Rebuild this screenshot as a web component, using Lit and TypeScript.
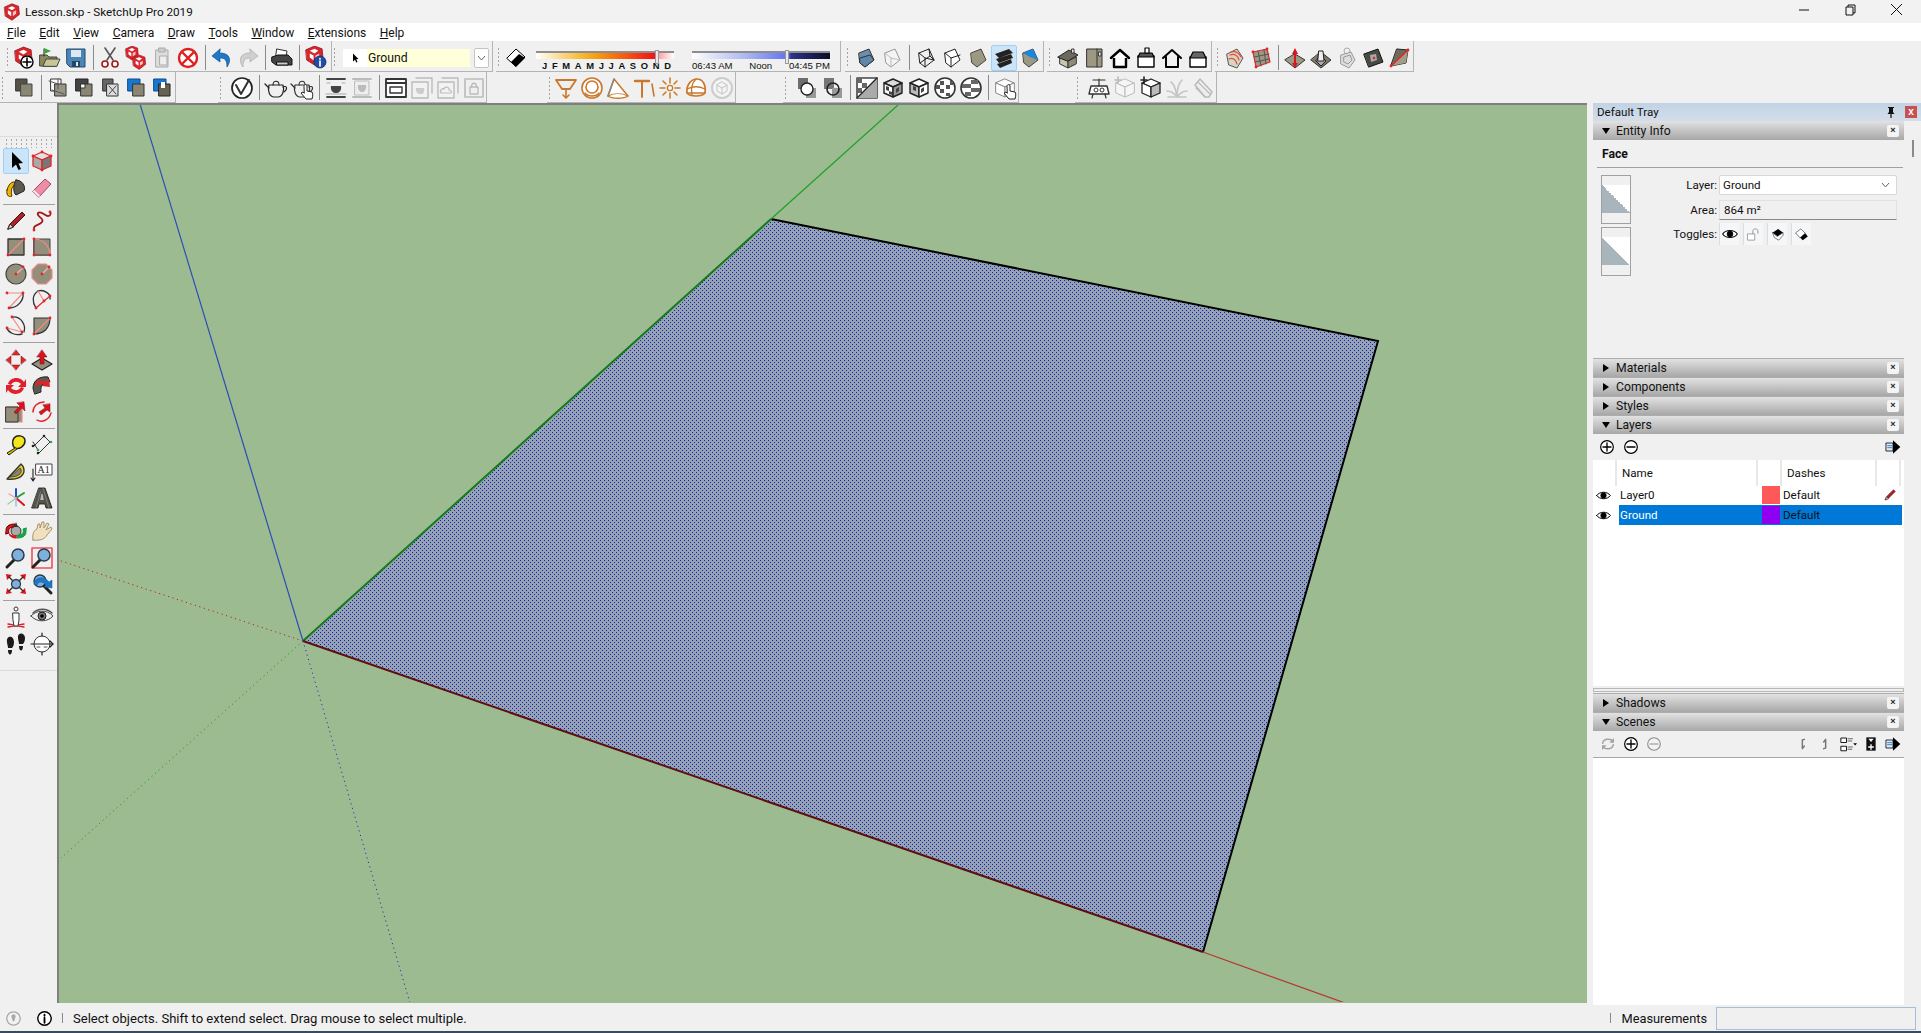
import { LitElement, css, html, svg } from 'lit';
import { customElement } from 'lit/decorators.js';

const RED = '#e0262b';
const GY = '#948f7b';
const DK = '#2f2f2a';

const p = (d: string, fill = 'none', stroke = 'none', w = 1) =>
  svg`<path d=${d} fill=${fill} stroke=${stroke} stroke-width=${w} stroke-linejoin="round" stroke-linecap="round"/>`;
const dot = (x: number, y: number, r = 1.4, c = RED) => svg`<circle cx=${x} cy=${y} r=${r} fill=${c}/>`;
const ring = (x: number, y: number, r: number, fill = 'none', stroke = DK, w = 1) =>
  svg`<circle cx=${x} cy=${y} r=${r} fill=${fill} stroke=${stroke} stroke-width=${w}/>`;

// the red sketchup mark
const su = (x: number, y: number, s: number) => svg`<g transform="translate(${x} ${y}) scale(${s})">
  ${p('M1 4 L10 0 L18 3 L19 13 L10 20 L2 15Z', '#d9252b', '#8c1419', 0.8)}
  ${p('M5 5 L10 3 L14 5 L10 8Z', '#fff')}${p('M5 8 L9 10 V15 L5 12Z', '#fff')}${p('M11 10 L15 8 V12 L11 15Z', '#f5c6c6')}
</g>`;

const cube = (t: string, l: string, r: string, s = DK, w = 1) => svg`
  ${p('M12 3 L21 7 L12 11 L3 7Z', t, s, w)}${p('M3 7 L12 11 V21 L3 17Z', l, s, w)}${p('M21 7 L12 11 V21 L21 17Z', r, s, w)}`;

// tilted box used by the face style buttons
const tilt = (a: string, b: string, s = '#333', w = 1) => svg`
  ${p('M5 7 L15 3 L20 14 L11 21 L6 17Z', a, s, w)}${p('M6 12 L16 9 L20 14 L11 21 L6 17Z', b, s, w)}`;

const magnifier = (x = 0, y = 0, lens = '#7fb0dc') => svg`<g transform="translate(${x} ${y})">
  ${p('M10 14 L3 21', 'none', '#222', 3)}${ring(14, 9, 6, lens, '#2b3a4a', 1.5)}</g>`;

const house = (fill: string, roof: string, s = '#000', w = 2) => svg`
  ${p('M6 11 V21 H18 V11', fill, s, w)}${p('M3 12 L12 4 L21 12', roof, s, w)}`;

const teapot = (s = '#222', f = 'none') => svg`
  ${p('M5 9 H19 C21 15 18 21 14 21 H10 C6 21 3 15 5 9Z', f, s, 1.2)}
  ${p('M9 9 C9 4 15 4 15 9', 'none', s, 1.1)}${p('M19 11 C23 9 24 13 20 16', 'none', s, 1.1)}${p('M5 12 L1 8', 'none', s, 1.3)}`;

const hand = (x = 0, y = 0) => svg`<g transform="translate(${x} ${y})">
  ${p('M3 2 C3 0 6 0 6 2 V7 L11 8 C12 9 12 12 11 15 H5 L0 9 L2 8 L3 9Z', '#fff', '#222', 1)}</g>`;

const fourArrows = (c = RED) => svg`${p('M12 2 L16 7 H8Z M12 22 L16 17 H8Z M2 12 L7 8 V16Z M22 12 L17 8 V16Z', c, '#7a0f0f', 0.5)}`;

const ICONS: Record<string, unknown> = {
  newfile: svg`${su(2, 1, 0.95)}${ring(15, 16, 6, '#fff', '#000', 1.4)}${p('M15 12 V20 M11 16 H19', 'none', '#000', 1.6)}`,
  open: svg`${p('M2 9 H9 L11 11 H19 V20 H2Z', '#8a8a5c', '#444')}${p('M5 20 L8 13 H22 L19 20Z', '#c7c694', '#444')}${p('M6 3 V10', 'none', '#222', 1)}${p('M6 2 L13 5 L6 8Z', '#3aa43a')}`,
  save: svg`${p('M3 3 H21 V21 H6 L3 18Z', '#4a87b8', '#24486a')}${p('M7 4 H17 V11 H7Z', '#dfe8f0')}${p('M8 15 H16 V21 H8Z', '#28445f')}${p('M12 16 H14 V20 H12Z', '#dfe8f0')}`,
  cut: svg`${p('M17 2 L9 14 M7 2 L15 14', 'none', '#555', 1.6)}${ring(7, 18, 3, '#fff', '#a01818', 1.6)}${ring(17, 18, 3, '#fff', '#a01818', 1.6)}`,
  copy: svg`${su(1, 0, 0.7)}${su(8, 9, 0.72)}`,
  paste: svg`${p('M6 4 H18 V21 H6Z', '#ddd', '#aaa')}${p('M9 2 H15 V6 H9Z', '#ccc', '#aaa')}${p('M10 10 H17 V19 H10Z', '#eee', '#aaa')}`,
  erase: svg`${ring(12, 12, 9, '#fff', '#e21d1d', 2.4)}${p('M7 7 L17 17 M17 7 L7 17', 'none', '#e21d1d', 2.4)}`,
  undo: svg`${p('M10 3 L2 10 L10 16 V12 C15 12 17 14 17 21 C22 14 20 7 10 7Z', '#1d78c8', '#10558f', 0.7)}`,
  redo: svg`${p('M14 3 L22 10 L14 16 V12 C9 12 7 14 7 21 C2 14 4 7 14 7Z', '#d0d0d0', '#aaa', 0.7)}`,
  print: svg`${p('M7 3 L17 5 L16 11 H6Z', '#fff', '#333')}${p('M2 11 L8 9 H18 L22 13 V19 H6 L2 16Z', '#444', '#111')}${p('M7 16 H18 V19 H7Z', '#ccc', '#111')}`,
  suinfo: svg`${su(1, 0, 0.95)}${ring(16, 16, 6, '#1d4fa8', '#0d2a60', 0.8)}${p('M16 15 V20 M16 12.5 V13', 'none', '#fff', 1.7)}`,
  eraserstyle: svg`${p('M3 12 L12 3 L21 11 L12 20Z', '#fff', '#000', 1)}${p('M7 16 L15 8 L21 12 L12 21Z', '#000')}`,
  fxray: tilt('#6d8fae', '#5f86ab'),
  fxray2: svg`${p('M5 7 L15 3 L20 14 L11 21 L6 17Z', '#f4f4f4', '#999')}${p('M5 7 L11 12 L20 14 M11 12 L11 21', 'none', '#bbb')}`,
  fwire: svg`${p('M5 7 L15 3 L20 14 L11 21 L6 17Z M5 7 L11 12 L20 14 M11 12 V21 M15 3 L16 10 L6 17 M16 10 L20 14', 'none', '#222')}`,
  fhidden: svg`${p('M5 7 L15 3 L20 14 L11 21 L6 17Z', '#fff', '#222')}${p('M5 7 L11 12 L20 9', 'none', '#222')}${p('M11 12 V21', 'none', '#222')}`,
  fshaded: svg`${p('M5 7 L15 3 L20 14 L11 21 L6 17Z', '#9d9882', '#444')}`,
  fstripe: svg`${p('M3 8 L17 3 L21 7 L7 12Z M4 13 L19 8 L21 12 L7 17Z M5 18 L19 13 L20 17 L8 22Z', '#222')}${p('M7 12 L21 7 L19 8 L4 13Z M7 17 L21 12 L19 13 L5 18Z', '#b9b39c')}`,
  ftex: svg`${p('M5 7 L15 3 L20 14 L11 21 L6 17Z', '#9d9882', '#444')}${p('M5 7 L15 3 L20 14 L12 11Z', '#1a86dc')}`,
  viso: svg`${p('M4 11 L12 15 V22 L4 18Z', '#c9c5b2', '#333')}${p('M20 11 L12 15 V22 L20 18Z', '#8f8a74', '#333')}${p('M2 11 L13 4 L22 9 L12 15Z', '#6c6a5c', '#222')}${p('M16 3 H18 V7 H16Z', '#fff', '#333')}`,
  vtop: svg`${p('M5 3 H20 V21 H5Z', '#9d9882', '#333')}${p('M15 3 V21', 'none', '#333')}${p('M17 6 H19 V10 H17Z', '#fff', '#333')}`,
  vfront: house('#fff', '#fff', '#000', 2.4),
  vright: svg`${p('M4 10 H20 V21 H4Z', '#fff', '#000', 1.4)}${p('M4 11 L6 7 H18 L20 11Z', '#555', '#000', 1.2)}${p('M11 2 H15 V7 H11Z', '#fff', '#000', 1.2)}`,
  vback: house('none', 'none', '#000', 2),
  vleft: svg`${p('M4 11 H20 V21 H4Z', '#fff', '#000', 1.4)}${p('M4 12 L7 6 H17 L20 12Z', '#666', '#000', 1.2)}`,
  sand1: svg`${p('M4 8 L14 3 L20 12 L14 22 L6 19Z', '#d9d4c8', '#555')}${p('M7 9 C12 7 15 10 16 14 M6 13 C10 11 13 14 14 18 M8 6 C12 5 16 7 18 11', 'none', '#e2502e', 1.2)}`,
  sand2: svg`${p('M4 6 L18 3 L21 16 L7 21Z', '#9d9882', RED, 1.2)}${p('M9 5 L12 20 M15 4 L17 18 M5 11 L20 8 M6 16 L20 13', 'none', '#555')}${dot(4, 6)}${dot(18, 3)}${dot(7, 21)}`,
  sand3: svg`${p('M12 8 L22 14 L12 22 L2 14Z', '#9d9882', '#333')}${p('M12 2 L15 8 H13 V17 H15 L12 22 L9 17 H11 V8 H9Z', '#d8141c')}`,
  sand4: svg`${p('M12 6 L22 14 L12 22 L2 14Z', '#7d7966', '#333')}${p('M12 10 L17 15 L12 20 L7 15Z', '#aaa', '#222')}${p('M10 5 L14 5 L15 15 H9Z', '#eee', '#222')}`,
  sand5: svg`${ring(12, 5, 3, 'none', '#aaa')}${p('M6 9 L16 6 L20 14 L14 22 L6 18Z', '#ddd', '#999')}${p('M9 11 L15 9 L17 14 L13 18 L9 16Z', 'none', '#999')}`,
  sand6: svg`${p('M3 8 L17 3 L22 16 L8 21Z', '#4a4a44', '#111')}${p('M9 9 L15 8 L16 14 L10 16Z', '#aaa')}${dot(13, 12, 1.3)}`,
  sand7: svg`${p('M10 3 L21 4 L19 17 L4 20Z', '#6d6a5c', '#222')}${p('M21 4 L4 20', 'none', RED, 1.3)}${p('M4 20 L21 4 L19 17Z', '#a19c86')}${p('M21 4 L4 20', 'none', RED, 1.3)}${dot(21, 4)}${dot(4, 20)}`,

  sq0: svg`${p('M4 3 H15 V15 H4Z', '#555349', '#333')}${p('M9 8 H20 V20 H9Z', '#8a8674', '#444')}`,
  sq1: svg`${p('M5 3 H15 V15 H5Z', '#fff', '#333')}${p('M9 8 H20 V20 H9Z', '#999584', '#333')}${p('M3 5 L12 8 M6 14 L18 18 M12 3 V13', 'none', '#555')}`,
  sq2: svg`${p('M4 3 H16 V15 H4Z', '#444', '#222')}${p('M9 8 H20 V20 H9Z', '#8a8674', '#333')}${p('M9 8 H13 V12 H9Z', '#fff', '#333')}`,
  sq3: svg`${p('M5 3 H15 V15 H5Z', '#666', '#333')}${p('M9 8 H20 V20 H9Z', '#ddd', '#333')}${p('M11 10 L18 18 M18 10 L11 18', 'none', '#444')}`,
  sq4: svg`${p('M4 3 H16 V15 H4Z', '#1877d1', '#0f4d8c')}${p('M9 8 H20 V20 H9Z', '#8a8674', '#333')}`,
  sq5: svg`${p('M4 3 H16 V15 H4Z', '#1877d1', '#0f4d8c')}${p('M9 8 H20 V20 H9Z', '#666352', '#222')}${p('M11 6 H15 V12 H11Z', '#fff')}`,
  vray: svg`${ring(12, 12, 10, '#fff', '#222', 1.7)}${p('M6 9 L11 18 L19 4', 'none', '#333', 2)}`,
  tea: teapot(),
  teahand: svg`${teapot('#333')}${hand(11, 8)}`,
  tealines: svg`${p('M3 3 H21 M3 21 H21', 'none', '#444', 1.8)}${p('M7 10 H17 C18 14 15 17 13 17 H11 C9 17 6 14 7 10Z', '#444')}${p('M3 7 H6 M18 7 H21 M2 18 H22', 'none', '#aaa')}`,
  teabox: svg`${p('M3 3 H21 M3 21 H21', 'none', '#bbb', 1.8)}${p('M5 5 H19 V19 H5Z', '#eee', '#bbb')}${p('M8 9 H16 C17 13 14 16 13 16 H11 C10 16 7 13 8 9Z', '#bbb')}`,
  win: svg`${p('M2 3 H22 V21 H2Z', '#fff', '#333', 1.8)}${p('M2 7 H22', 'none', '#333', 1.8)}${p('M6 11 H18 V17 H6Z', 'none', '#333', 1.4)}`,
  wintea: svg`${p('M6 2 H22 V17', 'none', '#bbb', 1.4)}${p('M2 6 H18 V22 H2Z', '#f2f2f2', '#bbb', 1.4)}${p('M6 12 H14 C15 15 13 18 12 18 H9 C8 18 5 15 6 12Z', '#ccc')}`,
  wincloud: svg`${p('M6 2 H22 V17', 'none', '#bbb', 1.4)}${p('M2 6 H18 V22 H2Z', '#f2f2f2', '#bbb', 1.4)}${p('M5 17 C3 14 7 12 8 13 C9 10 14 11 13 14 C16 14 16 17 14 17Z', 'none', '#bbb', 1.2)}`,
  winlock: svg`${p('M3 3 H21 V21 H3Z', 'none', '#bbb', 1.6)}${p('M8 11 H16 V18 H8Z', 'none', '#bbb', 1.3)}${p('M9.5 11 C9.5 6 14.5 6 14.5 11', 'none', '#bbb', 1.3)}`,

  funnel: svg`${p('M2 4 H22 L16 13 H8Z', 'none', '#c9782c', 1.8)}${p('M12 13 V21 M9 19 L12 22 L15 19', 'none', '#c9782c', 1.6)}`,
  rings: svg`${ring(12, 12, 10, '#fff', '#c9782c', 1.6)}${ring(12, 11, 6, 'none', '#c9782c', 1.6)}${p('M5 17 C8 21 16 21 19 17', 'none', '#c9782c', 1.4)}`,
  cone: svg`${p('M8 3 L2 20 C6 23 18 23 22 20Z', '#fff', '#c9782c', 1.5)}${p('M2 20 L8 3', 'none', '#888', 1.5)}${p('M2 20 C8 17 16 17 22 20', 'none', '#c9782c', 1.2)}`,
  tee: svg`${p('M3 5 H17', 'none', '#c9782c', 2.4)}${p('M10 5 V21', 'none', '#c9782c', 2)}${p('M20 8 L22 20', 'none', '#c9782c', 1.6)}`,
  burst: svg`${ring(12, 12, 2.6, '#fff', '#c9782c', 1.4)}${p('M12 2 V7 M12 17 V22 M2 12 H7 M17 12 H22 M5 5 L8 8 M16 16 L19 19 M19 5 L16 8 M8 16 L5 19', 'none', '#c9782c', 1.5)}`,
  dome: svg`${p('M3 17 C2 8 8 3 13 3 C19 3 22 9 21 17Z', '#fff', '#c9782c', 1.7)}${p('M3 17 C6 21 18 21 21 17 M12 3 C7 8 7 14 8 19 M3 13 C9 10 15 10 21 13', 'none', '#c9782c', 1.3)}`,
  circube: svg`${ring(12, 12, 10, '#f4f4f4', '#ccc', 2)}${p('M12 6 L17 9 V15 L12 18 L7 15 V9Z M7 9 L12 12 L17 9 M12 12 V18', 'none', '#c4c4c4')}`,
  ovl1: svg`${p('M3 2 H13 V13 H3Z', '#6d6d6d')}${p('M11 12 H21 V22 H11Z', '#999')}${ring(12, 13, 6, '#fff', '#222', 1.4)}`,
  ovl2: svg`${p('M3 2 H13 V13 H3Z', '#777')}${p('M11 12 H21 V22 H11Z', '#999')}${ring(12, 13, 6, 'none', '#222', 1.6)}`,
  diag: svg`${p('M2 2 H22 V22 H2Z', '#fff', '#444', 1.6)}${p('M2 22 L22 2 V22Z', '#aaa')}${p('M2 2 H7 V7 H2Z M7 7 H12 V12 H7Z M2 12 H7 V17 H2Z', '#666')}${p('M2 22 L22 2', 'none', '#222', 1.2)}`,
  ckcube1: svg`${cube('#ddd', '#fff', '#999', '#222', 1.4)}${p('M5 10 L8 11 V15 L5 14Z M8 15 L11 16 V19 L8 18Z M15 13 L18 11 V15 L15 17Z', '#444')}`,
  ckcube2: svg`${cube('#fff', '#bbb', '#fff', '#222', 1.4)}${p('M14 13 L17 11 V15 L14 17Z M6 10 L9 11 V15 L6 14Z', '#444')}`,
  ckcirc1: svg`${ring(12, 12, 10, '#fff', '#333', 1.6)}${p('M7 5 H11 V9 H7Z M13 9 H17 V13 H13Z M7 13 H11 V17 H7Z M13 17 H17 V20 H13Z M3 9 H7 V13 H3Z M17 5 H20 V9 H17Z', '#555')}`,
  ckcirc2: svg`${ring(12, 12, 10, '#fff', '#333', 1.6)}${p('M3 8 H12 V12 H3Z M12 12 H21 V16 H12Z M6 16 H12 V20 H6Z M12 4 H19 V8 H12Z', '#666')}`,
  cubehand: svg`${cube('#fff', '#fff', '#fff', '#888', 1)}${hand(11, 8)}`,
  robot: svg`${p('M4 10 H20 L22 18 H2Z', '#fff', '#333', 1.4)}${p('M12 3 V10', 'none', '#333', 1.2)}${p('M6 4 L18 4', 'none', '#333', 1.2)}${ring(9, 14, 2, 'none', '#333')}${ring(15, 14, 2, 'none', '#333')}${p('M6 18 L5 22 M18 18 L19 22', 'none', '#333', 1.2)}`,
  pluscube: svg`${cube('#f6f6f6', '#f6f6f6', '#f6f6f6', '#bbb', 1)}${p('M5 1 V7 M2 4 H8', 'none', '#bbb', 1.6)}`,
  plusblack: svg`${cube('#fff', '#fff', '#bbb', '#222', 1.3)}${p('M5 1 V7 M2 4 H8', 'none', '#222', 1.6)}`,
  fountain: svg`${p('M12 21 C11 14 10 9 6 6 M12 21 C12 14 13 8 17 4 M12 21 C9 17 6 15 2 15 M12 21 C15 17 18 15 22 15 M3 21 H21', 'none', '#c4c4c4', 1.6)}`,
  graypen: svg`${p('M4 9 L9 3 L21 16 L18 21 L14 21Z', '#eee', '#bbb', 1.5)}${p('M7 6 L19 18 M5 12 L14 21', 'none', '#bbb', 1.2)}`,

  select: svg`${p('M8 3 V19 L12 15.5 L14.5 21 L17 20 L14.5 14.5 L19 14Z', '#000')}`,
  component: svg`${cube('#e2e2e2', '#a8a8a8', '#777', RED, 1.3)}${dot(12, 3)}${dot(3, 7)}${dot(21, 7)}${dot(12, 21)}`,
  paint: svg`${p('M3 14 C5 6 10 4 14 8 C8 8 6 15 8 20 C4 22 2 18 3 14Z', '#f2b400', '#4a3b00')}${p('M12 4 C18 4 22 10 20 15 L12 19 C9 17 9 8 12 4Z', '#5c5a4e', '#222')}`,
  eraser: svg`${p('M3 15 L15 3 L21 8 L9 21Z', '#ef8ca6', '#a04a60')}${p('M3 15 L9 21 L10 20 L4 14Z', '#fff')}`,
  pencil: svg`${p('M6 15 L18 3 L21 6 L9 18 L4 20Z', '#a8242a', '#4a0f12')}${p('M4 20 L6 15 L9 18Z', '#e8d8a8', '#333')}`,
  freehand: svg`${p('M4 21 C3 15 9 17 12 13 C15 9 6 8 8 4 C11 1 15 7 18 7 C21 7 21 4 20 3', 'none', '#a01818', 1.8)}${dot(4, 21)}${dot(20, 3)}`,
  rect: svg`${p('M4 4 H20 V20 H4Z', GY, '#333', 1.3)}${p('M4 20 L20 4', 'none', '#f08a8a', 1.4)}${dot(4, 20)}${dot(20, 4)}`,
  rotrect: svg`${p('M4 4 H20 V20 H4Z', GY, '#444', 1)}${p('M4 4 C13 4 20 11 20 20 H4Z', GY)}${p('M4 4 C13 4 20 11 20 20 M4 20 H20 M4 4 V20', 'none', '#f08a8a', 1.2)}${p('M4 4 V20 H20', 'none', '#333', 1)}${dot(4, 4)}${dot(20, 20)}${dot(4, 20)}`,
  circle: svg`${ring(12, 12, 10, GY, '#444', 1.2)}${p('M12 12 L20 5', 'none', '#f5b0b0', 1.3)}${dot(12, 12)}${dot(19, 5)}`,
  polygon: svg`${p('M8 2 H16 L22 8 V16 L16 22 H8 L2 16 V8Z', GY, '#f08a8a', 1.2)}${p('M12 12 L19 5', 'none', '#f5b0b0', 1.3)}${dot(12, 12)}${dot(19, 5)}`,
  arc: svg`${p('M3 5 H19 L5 20', 'none', '#f08a8a', 1.2)}${p('M19 5 C20 12 14 20 5 20', 'none', '#333', 1.3)}${dot(3, 5)}${dot(19, 5)}${dot(5, 20)}`,
  arc2: svg`${p('M8 3 C14 1 21 6 20 11', 'none', '#333', 1.3)}${p('M8 3 C2 7 2 14 6 20', 'none', '#333', 1.3)}${p('M6 20 L20 8', 'none', RED, 1.2)}${p('M8 3 L14 13', 'none', '#f08a8a', 1.2)}${dot(6, 20)}${dot(20, 8)}${dot(14, 13)}`,
  arc3: svg`${p('M8 3 C18 2 22 12 20 18', 'none', '#333', 1.3)}${p('M8 3 L18 18 L3 14', 'none', '#f08a8a', 1.2)}${p('M3 14 C4 18 10 22 18 20', 'none', '#333', 1.3)}${dot(8, 3)}${dot(18, 18)}${dot(3, 14)}`,
  pie: svg`${p('M4 4 H20 C20 14 14 20 4 20Z', GY, '#333', 1.1)}${p('M4 20 L20 4', 'none', '#f08a8a', 1.3)}${dot(4, 20)}${dot(20, 4)}`,
  move: fourArrows(),
  pushpull: svg`${p('M2 16 L12 10 L22 16 L12 22Z', GY, '#222', 1.2)}${p('M12 2 L17 9 H14 V16 H10 V9 H7Z', '#d8141c', '#7a0f0f', 0.5)}`,
  rotate: svg`${p('M4 10 C6 3 16 2 20 8 L22 5 V13 H14 L17 10 C14 7 9 7 7 11Z M20 14 C18 21 8 22 4 16 L2 19 V11 H10 L7 14 C10 17 15 17 17 13Z', '#e0202a')}`,
  followme: svg`${p('M3 14 C3 6 10 2 18 3 L20 8 C14 7 10 11 11 18 L5 20Z', '#5c5a4e', '#222')}${p('M5 10 C8 5 14 6 15 8 L19 5 L20 13 L12 12 L13 10 C10 9 8 11 7 13Z', '#e0202a')}`,
  scale: svg`${p('M2 7 H18 V22 H2Z', GY, '#f08a8a', 1.2)}${p('M2 7 H14 V22 H2Z', GY, '#333', 1)}${p('M20 2 L21 11 L18 8 L12 14 L10 12 L16 6 L13 3Z', '#e0101a', '#7a0f0f', 0.5)}`,
  offset: svg`${p('M3 12 C3 6 8 2 14 2', 'none', '#e0202a', 1.4)}${p('M7 20 C12 23 19 20 21 13', 'none', '#e0202a', 1.4)}${p('M20 4 L20 12 L17 10 L11 15 L9 12 L15 8 L13 5Z', '#d8141c', '#7a0f0f', 0.5)}`,
  tape: svg`${p('M10 5 C14 1 21 3 21 8 C21 13 15 17 11 15 C8 13 8 8 10 5Z', '#f2e61a', '#222', 1.5)}${p('M11 15 L3 20 L5 22 L13 16', '#d6b800', '#222')}`,
  dim: svg`${p('M4 13 L14 3 M8 21 L20 9 M3 9 L8 17 M14 3 L20 9', 'none', '#333', 1)}${dot(3, 13, 1.3, '#222')}${dot(8, 20, 1.3, '#222')}${dot(14, 3, 1.3, '#222')}${dot(21, 9, 1.3, '#32a852')}${dot(8, 17, 1.3, '#32a852')}`,
  protractor: svg`${p('M3 19 L17 4 C23 9 21 21 3 19Z', '#e6d228', '#333', 1.4)}${p('M6 17 L16 8 C19 11 17 17 6 17Z', '#8a8570', '#333', 0.8)}`,
  text: svg`${p('M6 4 H22 V15 H6Z', '#fff', '#444')}<text x="7.5" y="13" font-family="Liberation Serif" font-size="10" fill="#222">A1</text>${p('M3 9 V21 M1 18 L3 21 L5 18', 'none', '#222', 1.1)}`,
  axes: svg`${p('M12 12 V3', 'none', '#1a4fd0', 2)}${p('M12 12 L20 7', 'none', '#23a23a', 2)}${p('M12 12 L20 19', 'none', '#d8141c', 2)}${p('M12 12 L5 8', 'none', '#f4a0a0', 1.4)}${p('M12 12 L4 18', 'none', '#9ad29a', 1.4)}${p('M12 12 V20', 'none', '#a0b4e8', 1.4)}`,
  text3d: svg`${p('M9 2 H15 L22 22 H16 L15 18 H9 L8 22 H2Z', '#55534a', '#111', 0.8)}${p('M11.4 8 H12.6 L13.8 14 H10.2Z', '#bbb')}${p('M6 22 L10.5 6 M13 2 L19 22', 'none', '#8a8a80', 0.8)}`,
  orbit: svg`${ring(12, 12, 5, '#aaa', '#333')}${p('M2 11 C2 6 7 5 11 5 L10 8 C5 8 4 11 5 14 L2 15Z', '#d8141c', '#600')}${p('M22 13 C22 18 17 19 13 19 L14 16 C19 16 20 13 19 10 L22 9Z', '#2a9c3c', '#0a4')}${p('M5 16 C8 20 12 20 13 19 L12 16 C9 17 7 16 5 14Z', '#d8141c')}${p('M12 3 L14 8 H10Z', '#333')}`,
  pan: svg`${p('M3 21 C2 15 4 11 7 10 L8 5 L10 5 L10 9 L12 3 L14 3 L14 9 L17 4 L19 5 L16 11 L21 8 L22 10 L17 16 C15 20 10 22 3 21Z', '#f1e0bf', '#a89570', 1)}`,
  zoom: magnifier(),
  zoomwin: svg`${p('M2 2 H22 V22 H2Z', 'none', '#f0505a', 1.6)}${magnifier()}`,
  zoomext: svg`${ring(12, 12, 4.5, '#7fb0dc', '#2b3a4a', 1.3)}${p('M2 2 L8 3 L3 8Z M22 2 L16 3 L21 8Z M2 22 L3 16 L8 21Z M22 22 L21 16 L16 21Z', '#d8141c')}${p('M5 5 L9 9 M19 5 L15 9 M5 19 L9 15 M19 19 L15 15', 'none', '#333', 1.4)}`,
  zoomprev: svg`${ring(10, 9, 6, '#7fb0dc', '#2b3a4a', 1.4)}${p('M14 14 L21 21', 'none', '#222', 3)}${p('M4 12 C4 5 14 3 19 10 L22 8 V16 L14 15 L16 13 C13 9 8 9 7 13Z', '#1d78c8', '#10558f', 0.5)}`,
  position: svg`${p('M4 19 L20 22 M4 22 L20 19', 'none', '#e0202a', 1.3)}${ring(12, 4, 2, '#fff', '#333')}${p('M9 8 H15 L15 15 L14 21 H10 L9 15Z', '#fff', '#333', 1)}`,
  look: svg`${p('M1 11 C6 5 17 4 23 11 C18 17 7 18 1 11Z', '#efefef', '#444', 1)}${ring(12, 11, 4, '#777', '#222')}${dot(12, 11, 1.8, '#000')}${p('M3 8 C8 3 17 3 22 8', 'none', '#555', 1.4)}`,
  walk: svg`${p('M3 10 C2 3 10 3 10 10 C10 13 9 15 8 16 H4 C4 14 3 12 3 10Z M4 18 H8 C8 24 4 24 4 18Z', '#1a1a1a')}${p('M14 6 C13 0 21 0 21 6 C21 9 20 11 19 12 H15 C15 10 14 8 14 6Z M15 14 H19 C19 20 15 20 15 14Z', '#1a1a1a')}`,
  section: svg`${ring(12, 12, 8, '#fff', '#333')}${p('M1 12 H23', 'none', '#222', 1.2)}${p('M20 9 L23 12 L20 15 M12 1 V4 M12 20 V23', 'none', '#222', 1.2)}${p('M7 15 H10 M14 15 H17', 'none', '#555')}`,

  eye: svg`${p('M1 12 C6 5 18 5 23 12 C18 19 6 19 1 12Z', '#fff', '#000', 1.6)}${ring(12, 12, 4.4, '#000', '#000')}`,
  unlock: svg`${p('M3 11 H14 V21 H3Z', '#fff', '#999', 1.4)}${p('M11 11 V6 C11 2 19 2 19 6 V10', 'none', '#999', 1.6)}`,
  castshadow: svg`${p('M4 9 L13 3 L21 9 L12 15Z', '#000')}${p('M4 9 L7 17 L14 21 L21 13 V9 L12 15Z', '#fff', '#333')}`,
  recvshadow: svg`${p('M3 9 L11 3 L18 10 L10 17Z', '#fff', '#333')}${p('M10 17 L18 10 L22 15 L14 21Z', '#000')}`,
  plus: svg`${ring(12, 12, 9.5, '#fff', '#000', 1.8)}${p('M12 6 V18 M6 12 H18', 'none', '#000', 2)}`,
  minus: svg`${ring(12, 12, 9.5, '#fff', '#000', 1.8)}${p('M6 12 H18', 'none', '#000', 2)}`,
  minusgray: svg`${ring(12, 12, 9.5, '#f2f2f2', '#8b8b8b', 1.6)}${p('M6 12 H18', 'none', '#8b8b8b', 1.8)}`,
  refresh: svg`${p('M4 11 C5 4 15 3 20 8 M20 13 C19 20 9 21 4 16', 'none', '#a3a3a3', 2.2)}${p('M21 3 V10 H14Z M3 21 V14 H10Z', '#a3a3a3')}`,
  details: svg`${p('M2 6 H12 V18 H2Z', '#dfeaf5', '#000', 1.2)}${p('M4 10 H10 M4 13 H10', 'none', '#2878c8', 1.4)}${p('M12 2 L23 12 L12 22Z', '#000')}`,
  up: svg`${p('M13 6 V18 M10 9 L13 5 M10 19 L13 18', 'none', '#777', 2.2)}`,
  down: svg`${p('M11 6 V18 M14 15 L11 19 M14 5 L11 6', 'none', '#777', 2.2)}`,
  list: svg`${p('M3 4 H10 V10 H3Z M3 15 H10 V21 H3Z', '#fff', '#000', 1.2)}${p('M12 5 H18 M12 8 H17 M12 16 H18 M12 19 H17', 'none', '#555', 1.2)}${p('M19 11 H24 L21.5 14Z', '#000')}`,
  addscene: svg`${p('M5 2 H19 V22 H5Z', '#111')}${p('M8 4 H16 L12 9Z', '#fff')}${p('M12 13 V20 M8.5 16.5 H15.5', 'none', '#fff', 2)}`,
};

const icon = (name: string, size = 24) =>
  html`<svg class="ic" width=${size} height=${size} viewBox="0 0 24 24">${ICONS[name]}</svg>`;

// '|' is a separator, a leading '*' marks the pressed button
type Item = string;

interface Group {
  x: number; // left edge in the row
  w: number;
  grip?: number;
  items: Item[];
}

const ROW1: Group[] = [
  { x: 5, w: 327, grip: 5, items: ['newfile', 'open', 'save', '|', 'cut', 'copy', 'paste', 'erase', '|', 'undo', 'redo', '|', 'print', '|', 'suinfo'] },
];
const ROW1B: Group[] = [
  { x: 846, w: 199, grip: 7, items: ['fxray', 'fxray2', '|', 'fwire', 'fhidden', 'fshaded', '*fstripe', 'ftex'] },
  { x: 1048, w: 165, grip: 7, items: ['viso', 'vtop', 'vfront', 'vright', 'vback', 'vleft'] },
  { x: 1216, w: 199, grip: 6, items: ['sand1', 'sand2', '|', 'sand3', 'sand4', 'sand5', 'sand6', 'sand7'] },
];
const ROW2: Group[] = [
  { x: 0, w: 176, grip: 10, items: ['sq0', '|', 'sq1', 'sq2', 'sq3', 'sq4', 'sq5'] },
  { x: 218, w: 269, grip: 10, items: ['vray', '|', 'tea', 'teahand', '|', 'tealines', 'teabox', '|', 'win', 'wintea', 'wincloud', 'winlock'] },
  { x: 547, w: 189, grip: 5, items: ['funnel', 'rings', 'cone', 'tee', 'burst', 'dome', 'circube'] },
  { x: 783, w: 236, grip: 10, items: ['ovl1', 'ovl2', '|', 'diag', 'ckcube1', 'ckcube2', 'ckcirc1', 'ckcirc2', '|', 'cubehand'] },
  { x: 1075, w: 142, grip: 10, items: ['robot', 'pluscube', 'plusblack', 'fountain', 'graypen'] },
];

const PALETTE: string[] = [
  '*select', 'component', 'paint', 'eraser', '-',
  'pencil', 'freehand', 'rect', 'rotrect', 'circle', 'polygon', 'arc', 'arc2', 'arc3', 'pie', '-',
  'move', 'pushpull', 'rotate', 'followme', 'scale', 'offset', '-',
  'tape', 'dim', 'protractor', 'text', 'axes', 'text3d', '-',
  'orbit', 'pan', 'zoom', 'zoomwin', 'zoomext', 'zoomprev', '-',
  'position', 'look', 'walk', 'section',
];

const MENU: [string, string][] = [
  ['F', 'ile'], ['E', 'dit'], ['V', 'iew'], ['C', 'amera'], ['D', 'raw'],
  ['T', 'ools'], ['W', 'indow'], ['E', 'xtensions'], ['H', 'elp'],
];
const MONTHS = 'JFMAMJJASOND'.split('');

@customElement('app-root')
export class AppRoot extends LitElement {
  static styles = css`
    :host {
      display: flex;
      flex-direction: column;
      width: 1921px;
      height: 1033px;
      overflow: hidden;
      background: #f0f0f0;
      font-family: Roboto, 'Open Sans', sans-serif;
      font-size: 12.2px;
      color: #111;
    }
    .ic { display: block; flex: none; }

    .title {
      height: 23px;
      background: #f2f2f2;
      display: flex;
      align-items: center;
      padding-left: 3px;
      font-size: 11.7px;
    }
    .title span { margin-left: 4px; }
    .win { display: flex; margin: -2px 2px 0 auto; }
    .win svg { width: 46px; height: 23px; }

    .menu {
      height: 18px;
      box-sizing: border-box;
      padding: 1px 0 0 7px;
      background: #fff;
      display: flex;
      align-items: center;
      gap: 13.5px;
      font-size: 12px;
    }
    .menu u { text-underline-offset: 1px; }

    .row { height: 31px; display: flex; }
    .tb {
      height: 100%;
      box-sizing: border-box;
      display: flex;
      align-items: center;
      flex: none;
      border-bottom: 1.5px solid #b4b4b4;
      border-right: 1.5px solid #b4b4b4;
      padding-top: 1px;
    }
    .row.first .tb { padding-top: 3px; }
    .grip {
      flex: none;
      align-self: stretch;
      margin: 3px 0 3px 1px;
      background-image: radial-gradient(#a4a4a4 0.8px, transparent 0.9px);
      background-size: 3px 4px;
      background-repeat: repeat-y;
      background-position: 0 0;
    }
    .btn {
      width: 26px;
      height: 26px;
      flex: none;
      display: flex;
      align-items: center;
      justify-content: center;
      box-sizing: border-box;
    }
    .btn.on { background: #cce4f7; border: 1px solid #99d1ff; border-radius: 2px; }
    .sep { width: 8px; height: 25px; flex: none; display: flex; justify-content: center; }
    .sep::after { content: ''; width: 1px; background: #8a8a8a; }
    .spacer { flex: none; }

    .layer { display: flex; align-items: center; margin-left: 5px; height: 18px; }
    .layer-ptr { width: 24px; height: 18px; background: #fff; display: flex; align-items: center; justify-content: center; }
    .layer-name { width: 103px; height: 18px; box-sizing: border-box; padding-left: 1px; background: #ffffd9; line-height: 18px; }
    .layer-dd {
      width: 13px; height: 18px; margin-left: 4px; background: #fff; border: 1px solid #c4c4c4;
      border-radius: 2px; display: flex; align-items: center; justify-content: center;
    }

    .bar { width: 138px; display: flex; flex-direction: column; align-self: flex-start; margin: 7px 0 0 7px; }
    .bar.time-bar { margin-left: 18px; }
    .track { height: 8px; box-sizing: border-box; border-top: 2px solid #8d8d8d; position: relative; }
    .months {
      background: linear-gradient(90deg, #fff 0%, #f8c040 30%, #f59a10 45%, #f51515 85%, #f51515 86.5%, #ff9a9a 88%, #fff 100%);
    }
    .time { background: linear-gradient(90deg, #fff 0%, #a9b5ef 40%, #6476f5 68%, #6476f5 69%, #2c3488 72%, #0b0d24 100%); }
    .thumb { position: absolute; top: -3px; width: 4px; height: 14px; background: #e8e8e8; border: 1px solid #999; box-sizing: border-box; }
    .lbls { display: flex; justify-content: space-between; padding: 2px 3px 0 6px; font: 700 9.4px/10px 'Liberation Sans', sans-serif; color: #111; }
    .time-bar .lbls { padding: 2px 0 0; font-weight: 400; font-size: 9.6px; }

    .main { flex: 1; min-height: 0; display: flex; }
    .palette { width: 57px; flex: none; display: flex; flex-direction: column; }
    .palette-top { height: 34px; border-bottom: 1px solid #dcdcdc; box-sizing: border-box; }
    .palette-grip { height: 10px; background-image: radial-gradient(#a8a8a8 0.8px, transparent 0.9px); background-size: 5px 4px; margin: 1px 4px 0; }
    .pal-grid { display: grid; grid-template-columns: 26px 26px; justify-content: center; gap: 0; padding-left: 1px; }
    .pal-grid .cell { height: 26.4px; width: 26px; display: flex; align-items: center; justify-content: center; box-sizing: border-box; }
    .cell.on { background: #cce4f7; border: 1px solid #99d1ff; border-radius: 2px; }
    .pal-sep { grid-column: 1 / 3; height: 6.8px; display: flex; align-items: center; }
    .pal-sep::after { content: ''; flex: 1; height: 1px; background: #a0a0a0; }
    .pal-end { margin-top: 13px; border-top: 1px solid #dcdcdc; }

    .view { width: 1530px; flex: none; box-sizing: border-box; border-left: 2px solid #7f7f7f; border-top: 2px solid #7f7f7f; background: #9dbb91; }
    .view svg { display: block; }

    .tray { margin-left: 6px; width: 328px; flex: none; display: flex; flex-direction: column; }
    .tray-title {
      height: 18px;
      background: linear-gradient(#c2d2e4, #d4deea);
      display: flex;
      align-items: center;
      padding-left: 4px;
      font-size: 11.6px;
    }
    .tray-title b { font-weight: 400; flex: 1; }
    .pin { margin-right: 9px; }
    .tray-x { width: 12px; height: 12px; background: #c75050; color: #fff; font: 700 10px/12px 'Liberation Sans', sans-serif; text-align: center; margin-right: 4px; }
    .tray-body { flex: 1; display: flex; min-height: 0; }
    .panels { width: 311px; flex: none; display: flex; flex-direction: column; }
    .rail { flex: 1; padding: 19px 0 0 8px; }
    .thumbbar { width: 2px; height: 17px; background: #8a8a8a; }

    .ph {
      height: 19px;
      box-sizing: border-box;
      flex: none;
      border-top: 1px solid #adadad;
      background: linear-gradient(#e2e2e2, #a7a7a7);
      display: flex;
      align-items: center;
      padding-left: 8px;
    }
    .ph.first { border-top: none; height: 19px; }
    .ph b { font-weight: 400; flex: 1; color: #111; margin-left: 5px; }
    .px {
      width: 12px; height: 12px; background: #f4f4f4; border-radius: 2px; margin-right: 5px;
      font: 700 9px/11px 'Liberation Sans', sans-serif; text-align: center; color: #222;
    }

    .ei { height: 218px; flex: none; padding: 0 1px 0 4px; box-sizing: border-box; }
    .ei-head { height: 27px; border-bottom: 1px solid #a0a0a0; padding-left: 5px; font-weight: 700; line-height: 28px; }
    .ei-body { display: flex; padding: 7px 0 0 4px; }
    .swatches { width: 30px; display: flex; flex-direction: column; gap: 3px; flex: none; }
    .swatch { height: 49px; box-sizing: border-box; border: 1px solid #a0a0a0; padding: 9px 0 10px; }
    .swatch i { display: block; height: 100%; background: linear-gradient(to top right, #a9b5bd 50%, #fff 50%); }
    .ei-form { flex: 1; display: grid; grid-template-columns: 86px 178px; grid-auto-rows: min-content; column-gap: 2px; font-size: 11.6px; }
    .ei-form label { text-align: right; align-self: center; }
    .ei-sel { height: 20px; box-sizing: border-box; background: #fff; border: 1px solid #d8d8d8; border-radius: 2px; display: flex; align-items: center; justify-content: space-between; padding: 0 6px 0 3px; }
    .ei-area { height: 20px; box-sizing: border-box; margin-top: 5px; border: 1px solid #e2e2e2; border-bottom-color: #888; padding: 0 4px; line-height: 18px; }
    .ei-form label.la { margin-top: 5px; }
    .ei-tog { display: flex; gap: 4px; margin-top: 3px; }
    .ei-tog div { width: 20px; height: 22px; box-sizing: border-box; background: #f4f6f8; border-left: 1px solid #dcdcdc; display: flex; align-items: center; justify-content: center; }
    .ei-form label.lt { margin-top: 3px; }

    .ltools { height: 26px; flex: none; display: flex; align-items: center; padding: 0 3px 0 6px; gap: 8px; }
    .grow { flex: 1; }
    .ltable { height: 226px; flex: none; background: #fff; font-size: 11.6px; }
    .lhead { height: 25px; display: grid; grid-template-columns: 24px 141px 24px 95px 24px; align-items: center; }
    .lhead div { height: 100%; border-right: 2px solid #e8e8e8; box-sizing: border-box; padding-left: 5px; line-height: 26px; }
    .lrow { height: 20px; display: grid; grid-template-columns: 26px 143px 20px 1fr; align-items: center; padding-right: 2px; }
    .lrow .eye { padding-left: 3px; }
    .lname { height: 20px; line-height: 20px; padding-left: 1px; }
    .lsw { width: 18px; height: 18px; }
    .ldash { padding-left: 1px; display: flex; justify-content: space-between; align-items: center; height: 20px; padding-right: 5px; }
    .lrow.sel .lname, .lrow.sel .ldash, .lrow.sel .lswc { background: #0078d7; }
    .lrow.sel .lname { color: #fff; }
    .lswc { height: 20px; display: flex; align-items: center; }
    .empty-bar { height: 4px; margin: 2px 0 1px; flex: none; border: 1px solid #b8b8b8; box-sizing: border-box; }
    .stools { height: 27px; box-sizing: border-box; flex: none; border-bottom: 1px solid #a8a8a8; display: flex; align-items: center; padding: 0 3px 0 7px; }
    .st-l { display: flex; gap: 7px; }
    .st-r { display: flex; gap: 6px; align-items: center; }
    .white { flex: 1; background: #fff; margin-bottom: -2px; }

    .status { height: 28px; box-sizing: border-box; padding-top: 2px; flex: none; display: flex; align-items: center; font-size: 13.05px; }
    .st-i1 { margin-left: 5px; }
    .st-i2 { margin-left: 14px; }
    .st-sep { width: 1px; height: 10px; background: #888; margin: 0 10px 0 9px; }
    .st-text { flex: 1; color: #111; }
    .st-m { margin: 0 9px 0 1px; font-size: 12.8px; }
    .st-box { width: 200px; height: 23px; box-sizing: border-box; border: 1px solid #a9bcd8; margin-right: 5px; }
    .bottom { height: 2px; flex: none; background: #3a4a5e; }
  `;

  private renderItems(items: Item[]) {
    return items.map((it) => {
      if (it === '|') return html`<div class="sep"></div>`;
      const on = it.startsWith('*');
      return html`<div class="btn ${on ? 'on' : ''}">${icon(on ? it.slice(1) : it)}</div>`;
    });
  }

  private renderGroup(g: Group, prevEnd: number) {
    return html`
      <div class="spacer" style="width:${g.x - prevEnd}px"></div>
      <div class="tb" style="width:${g.w}px">
        <div class="grip" style="width:${g.grip ?? 5}px"></div>
        ${this.renderItems(g.items)}
      </div>`;
  }

  private renderGroups(gs: Group[], start = 0) {
    let end = start;
    return gs.map((g) => {
      const t = this.renderGroup(g, end);
      end = g.x + g.w;
      return t;
    });
  }

  private renderViewport() {
    return html`<svg width="1528" height="897" viewBox="0 0 1528 897">
      <defs>
        <pattern id="dots" width="4" height="4" patternUnits="userSpaceOnUse">
          <rect width="4" height="4" fill="#95a3ac"></rect>
          <rect x="0" y="0" width="1" height="1" fill="#1414e6"></rect>
          <rect x="2" y="2" width="1" height="1" fill="#1414e6"></rect>
        </pattern>
      </defs>
      <g transform="translate(-59 -105)">
        <path d="M771 219 L1378 341 L1203 952 L303 641Z" fill="url(#dots)"></path>
        <path d="M771 219 L1378 341 L1203 952" fill="none" stroke="#000" stroke-width="2"></path>
        <path d="M303 641 L771 219" fill="none" stroke="#147a1e" stroke-width="2"></path>
        <path d="M303 641 L1203 952" fill="none" stroke="#5d0f0f" stroke-width="2"></path>
        <path d="M771 219 L898 105" stroke="#1fa025" stroke-width="1.2"></path>
        <path d="M303 641 L140 104" stroke="#2c4fb5" stroke-width="1.2"></path>
        <path d="M1203 952 L1345 1003" stroke="#b7332b" stroke-width="1.2"></path>
        <path d="M303 641 L410 1003" stroke="#2020c0" stroke-width="1" stroke-dasharray="1.2 3.5" opacity="0.9"></path>
        <path d="M303 641 L61 858" stroke="#10a010" stroke-width="1" stroke-dasharray="1.2 3.5" opacity="0.9"></path>
        <path d="M303 641 L58 560" stroke="#c01010" stroke-width="1" stroke-dasharray="1.2 3.5" opacity="0.9"></path>
      </g>
    </svg>`;
  }

  private panelHead(name: string, open: boolean, first = false) {
    return html`<div class="ph ${first ? 'first' : ''}">
      <svg class="ic" width="10" height="10" viewBox="0 0 10 10">
        ${open ? svg`<path d="M1 2 H9 L5 8Z" fill="#000"></path>` : svg`<path d="M2 1 V9 L8 5Z" fill="#000"></path>`}
      </svg>
      <b>${name}</b>
      <div class="px">×</div>
    </div>`;
  }

  render() {
    return html`
      <div class="title">
        <svg class="ic" width="18" height="18" viewBox="0 0 24 24">${su(1, 1, 1.1)}</svg>
        <span>Lesson.skp - SketchUp Pro 2019</span>
        <div class="win">
          <svg viewBox="0 0 46 23"><path d="M18 11 H28" stroke="#111" stroke-width="1"></path></svg>
          <svg viewBox="0 0 46 23"><path d="M19 8 H26 V16 H19Z M21 8 V6 H28 V14 H26" fill="none" stroke="#111"></path></svg>
          <svg viewBox="0 0 46 23"><path d="M18 5 L29 16 M29 5 L18 16" stroke="#111" stroke-width="1"></path></svg>
        </div>
      </div>
      <div class="menu">
        ${MENU.map(([a, b]) => html`<span><u>${a}</u>${b}</span>`)}
      </div>
      <div class="row first">
        ${this.renderGroups(ROW1)}
        <div class="tb" style="width:161px">
          <div class="grip" style="width:5px"></div>
          <div class="layer">
            <div class="layer-ptr">
              <svg class="ic" width="12" height="12" viewBox="0 0 24 24">${ICONS.select}</svg>
            </div>
            <div class="layer-name">Ground</div>
            <div class="layer-dd">
              <svg class="ic" width="9" height="6" viewBox="0 0 9 6"><path d="M1 1 L4.5 5 L8 1" fill="none" stroke="#666"></path></svg>
            </div>
          </div>
        </div>
        <div class="spacer" style="width:3px"></div>
        <div class="tb" style="width:345px">
          <div class="grip" style="width:6px"></div>
          <div class="btn">${icon('eraserstyle')}</div>
          <div class="bar">
            <div class="track months"><div class="thumb" style="left:119px"></div></div>
            <div class="lbls">${MONTHS.map((m) => html`<span>${m}</span>`)}</div>
          </div>
          <div class="bar time-bar">
            <div class="track time"><div class="thumb" style="left:93px"></div></div>
            <div class="lbls"><span>06:43 AM</span><span>Noon</span><span>04:45 PM</span></div>
          </div>
        </div>
        ${this.renderGroups(ROW1B, 842)}
      </div>
      <div class="row">${this.renderGroups(ROW2)}</div>
      <div class="main">
        <div class="palette">
          <div class="palette-top"></div>
          <div class="palette-grip"></div>
          <div class="pal-grid">
            ${PALETTE.map((it) => {
              if (it === '-') return html`<div class="pal-sep"></div>`;
              const on = it.startsWith('*');
              return html`<div class="cell ${on ? 'on' : ''}">${icon(on ? it.slice(1) : it)}</div>`;
            })}
          </div>
          <div class="pal-end"></div>
        </div>
        <div class="view">${this.renderViewport()}</div>
        <div class="tray">
          <div class="tray-title">
            <b>Default Tray</b>
            <svg class="ic pin" width="10" height="12" viewBox="0 0 10 12"><path d="M2 1 H8 V2 H7 V6 L8.5 8 H5.6 V12 H4.4 V8 H1.5 L3 6 V2 H2Z" fill="#111"></path></svg>
            <div class="tray-x">x</div>
          </div>
          <div class="tray-body">
            <div class="panels">
              ${this.panelHead('Entity Info', true, true)}
              <div class="ei">
                <div class="ei-head">Face</div>
                <div class="ei-body">
                  <div class="swatches">
                    <div class="swatch"><i></i></div>
                    <div class="swatch"><i></i></div>
                  </div>
                  <div class="ei-form">
                    <label>Layer:</label>
                    <div class="ei-sel">
                      Ground
                      <svg class="ic" width="9" height="6" viewBox="0 0 9 6"><path d="M1 1 L4.5 5 L8 1" fill="none" stroke="#666"></path></svg>
                    </div>
                    <label class="la">Area:</label>
                    <div class="ei-area">864 m²</div>
                    <label class="lt">Toggles:</label>
                    <div class="ei-tog">
                      <div>${icon('eye', 16)}</div>
                      <div>${icon('unlock', 15)}</div>
                      <div>${icon('castshadow', 15)}</div>
                      <div>${icon('recvshadow', 15)}</div>
                    </div>
                  </div>
                </div>
              </div>
              ${this.panelHead('Materials', false)}
              ${this.panelHead('Components', false)}
              ${this.panelHead('Styles', false)}
              ${this.panelHead('Layers', true)}
              <div class="ltools">
                ${icon('plus', 16)} ${icon('minus', 16)}
                <div class="grow"></div>
                ${icon('details', 16)}
              </div>
              <div class="ltable">
                <div class="lhead">
                  <div></div><div>Name</div><div></div><div>Dashes</div><div></div>
                </div>
                <div class="lrow">
                  <div class="eye">${icon('eye', 15)}</div>
                  <div class="lname">Layer0</div>
                  <div class="lswc"><div class="lsw" style="background:#ff5858"></div></div>
                  <div class="ldash">Default ${icon('pencil', 14)}</div>
                </div>
                <div class="lrow sel">
                  <div class="eye">${icon('eye', 15)}</div>
                  <div class="lname">Ground</div>
                  <div class="lswc"><div class="lsw" style="background:#9000f0"></div></div>
                  <div class="ldash">Default</div>
                </div>
              </div>
              <div class="empty-bar"></div>
              ${this.panelHead('Shadows', false)}
              ${this.panelHead('Scenes', true)}
              <div class="stools">
                <div class="st-l">${icon('refresh', 16)} ${icon('plus', 16)} ${icon('minusgray', 16)}</div>
                <div class="grow"></div>
                <div class="st-r">
                  ${icon('down', 16)} ${icon('up', 16)} ${icon('list', 18)} ${icon('addscene', 16)} ${icon('details', 16)}
                </div>
              </div>
              <div class="white"></div>
            </div>
            <div class="rail"><div class="thumbbar"></div></div>
          </div>
        </div>
      </div>
      <div class="status">
        <svg class="ic st-i1" width="17" height="17" viewBox="0 0 24 24">${ring(12, 12, 9.5, '#f2f2f2', '#a8a8a8', 1.8)}${p('M9 9 C9 5 15 5 15 9 L13 16 H11Z', '#a8a8a8')}</svg>
        <svg class="ic st-i2" width="17" height="17" viewBox="0 0 24 24">${ring(12, 12, 9.5, '#fff', '#000', 2)}${p('M12 11 V18 M12 6.5 V8', 'none', '#000', 2.6)}</svg>
        <div class="st-sep"></div>
        <div class="st-text">Select objects. Shift to extend select. Drag mouse to select multiple.</div>
        <div class="st-sep"></div>
        <div class="st-m">Measurements</div>
        <div class="st-box"></div>
      </div>
      <div class="bottom"></div>
    `;
  }
}
